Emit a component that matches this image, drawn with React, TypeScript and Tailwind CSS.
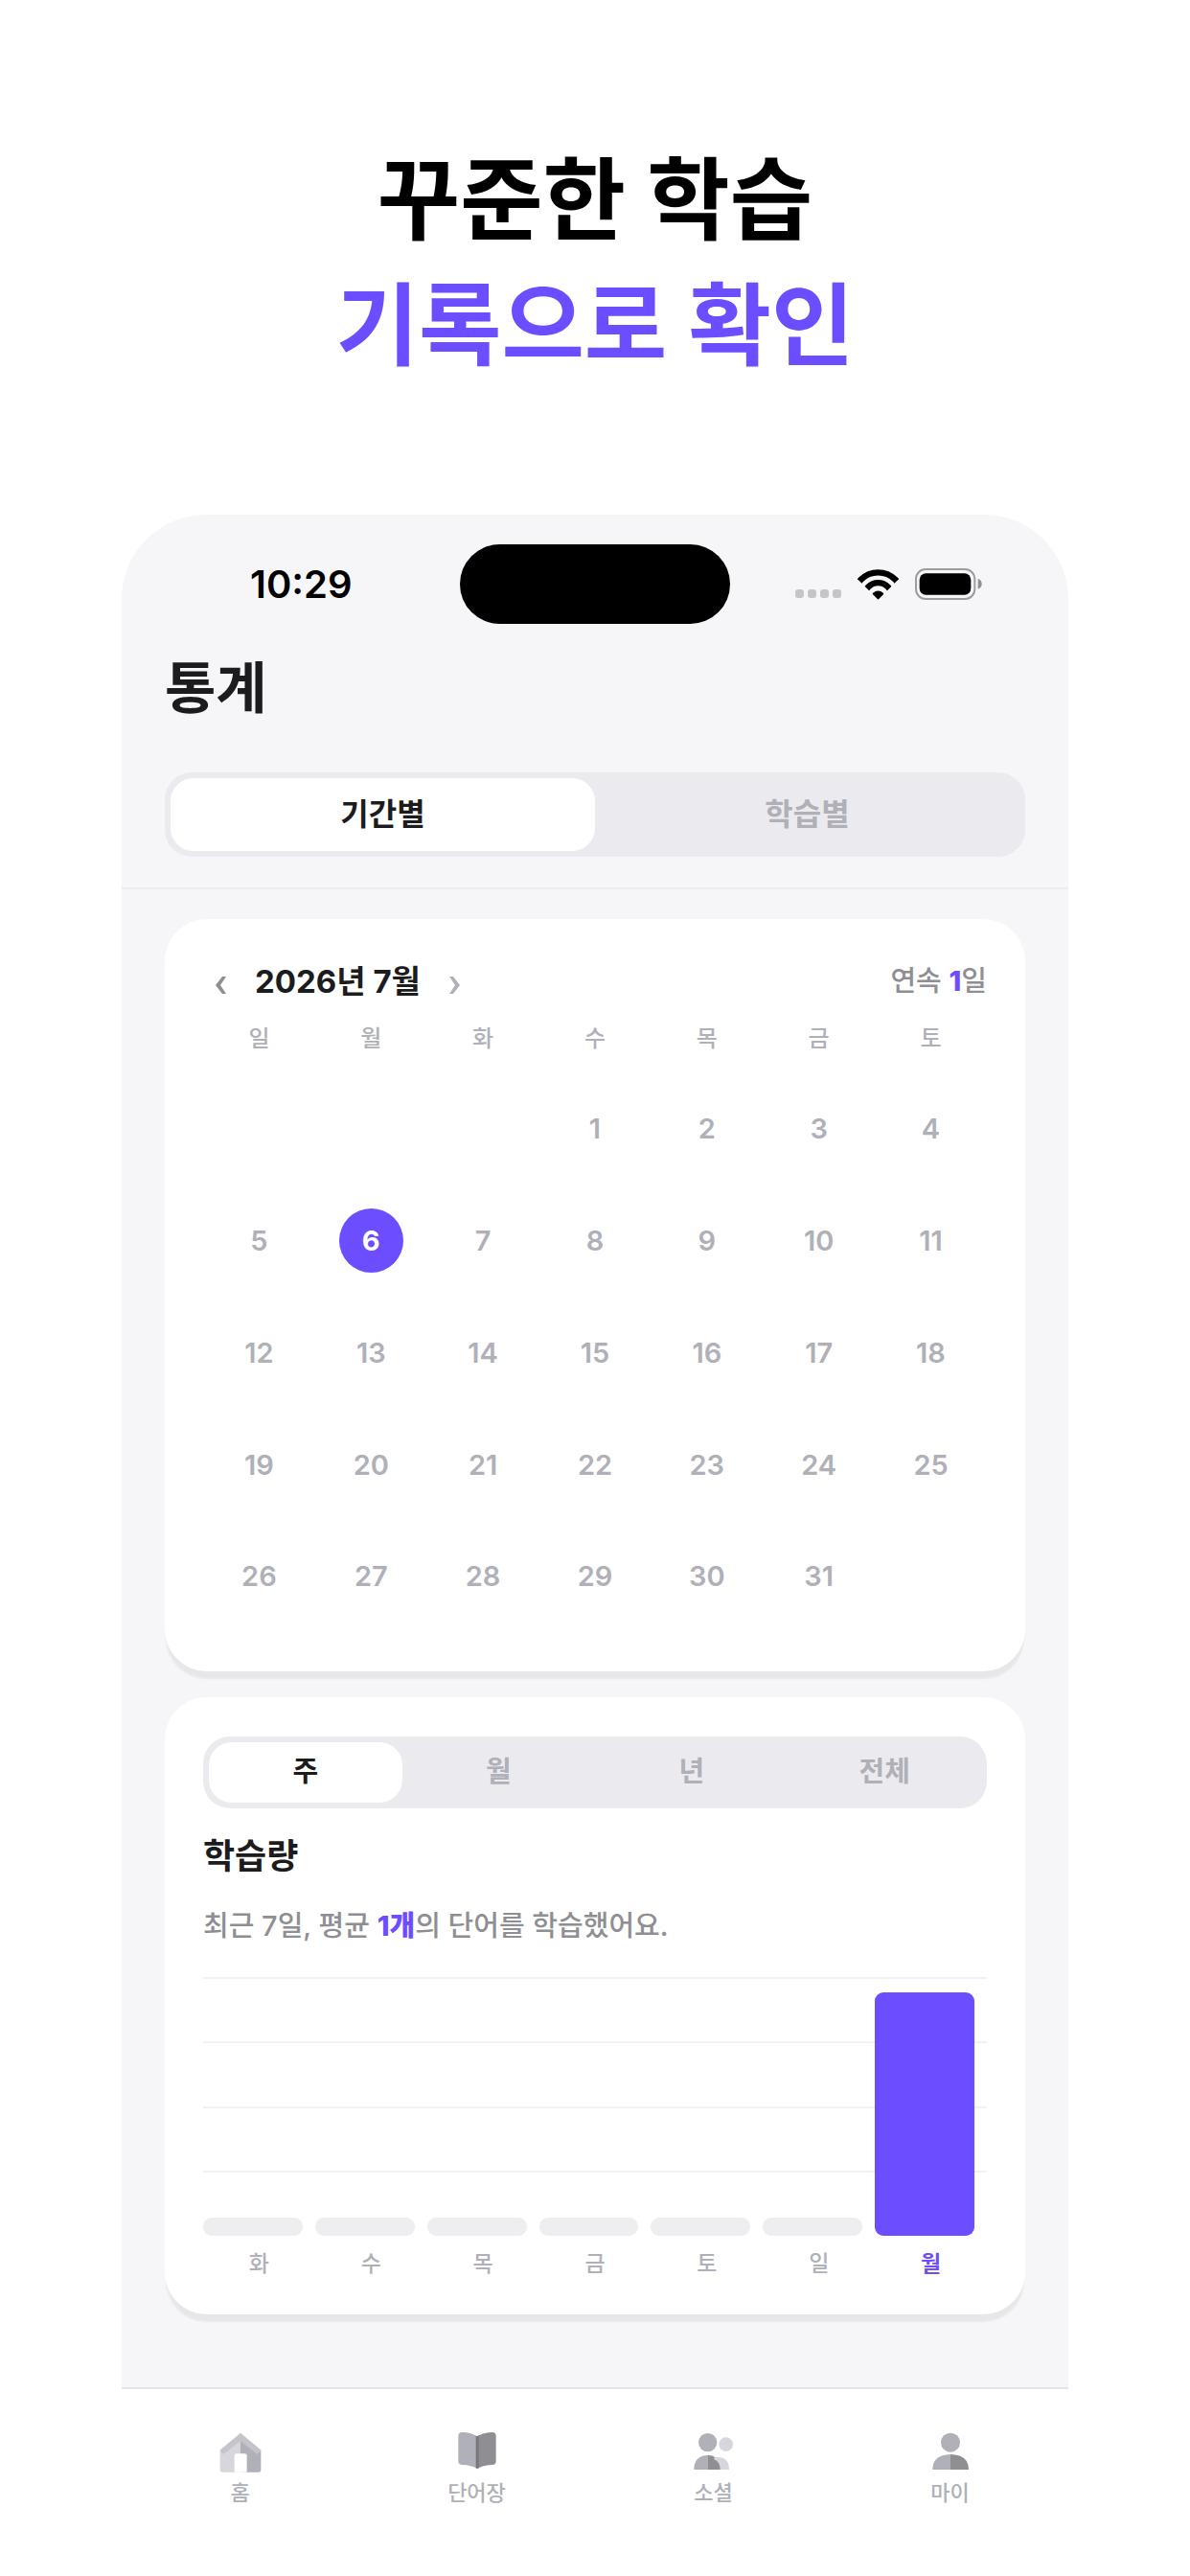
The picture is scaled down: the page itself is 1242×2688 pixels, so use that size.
import { useState, type ReactNode } from "react";
import clsx from "clsx";

const viewTabs = ["기간별", "학습별"];
const rangeTabs = ["주", "월", "년", "전체"];
const weekdays = ["일", "월", "화", "수", "목", "금", "토"];

// July 2026 starts on a Wednesday
const weeks: (number | null)[][] = [
  [null, null, null, 1, 2, 3, 4],
  [5, 6, 7, 8, 9, 10, 11],
  [12, 13, 14, 15, 16, 17, 18],
  [19, 20, 21, 22, 23, 24, 25],
  [26, 27, 28, 29, 30, 31, null],
];
const today = 6;

const studyData = [
  { day: "화", percent: 0 },
  { day: "수", percent: 0 },
  { day: "목", percent: 0 },
  { day: "금", percent: 0 },
  { day: "토", percent: 0 },
  { day: "일", percent: 0 },
  { day: "월", percent: 94 },
];

function WifiIcon() {
  return (
    <svg viewBox="0 0 128 94" className="w-[43px] h-8" aria-hidden="true">
      <clipPath id="wifi-wedge">
        <path d="M64 94L-2 28V-5H130V28Z" />
      </clipPath>
      <g clipPath="url(#wifi-wedge)" fill="none" stroke="#000" strokeWidth="19">
        <circle cx="64" cy="85" r="75.5" />
        <circle cx="64" cy="85" r="43.5" />
        <circle cx="64" cy="87" r="21" fill="#000" stroke="none" />
      </g>
    </svg>
  );
}

function BatteryIcon() {
  return (
    <svg viewBox="0 0 210 99" className="w-[70px] h-[33px]" aria-hidden="true">
      <rect x="3" y="3" width="184" height="93" rx="30" fill="none" stroke="#9d9d9f" strokeWidth="6" />
      <rect x="14" y="16" width="161" height="67" rx="20" />
      <path d="M197 33Q209 37 209 49T197 65Z" fill="#8f8f91" />
    </svg>
  );
}

function HomeIcon() {
  return (
    <svg viewBox="0 0 132 126" className="w-11 h-[42px]" aria-hidden="true">
      <path d="M66 3L2 56V117Q2 125 10 125H66Z" fill="#d6d6dc" />
      <path d="M66 3L130 56V117Q130 125 122 125H66Z" fill="#b0b0b8" />
      <path d="M66 3L130 56L128 60L119 69L66 27L13 69L4 60L2 56Z" fill="#c4c4ca" />
      <path d="M47 125V73Q47 67 53 67H79Q86 67 86 73V125Z" fill="#fff" />
    </svg>
  );
}

function BookIcon() {
  return (
    <svg viewBox="0 0 132 126" className="w-11 h-[42px]" aria-hidden="true">
      <path d="M66 13Q46 0 19 0Q7 0 7 12V90Q7 102 20 102Q48 103 66 114Z" fill="#b0b0b8" />
      <path d="M66 13Q86 0 113 0Q125 0 125 12V90Q125 102 112 102Q84 103 66 114Z" fill="#8e8e93" />
      <path d="M62 11L66 13L71 10V112L66 114L62 112Z" fill="#77777c" />
    </svg>
  );
}

function SocialIcon() {
  return (
    <svg viewBox="0 0 132 126" className="w-11 h-[42px]" aria-hidden="true">
      <circle cx="104" cy="38" r="22" fill="#d6d6dc" />
      <path d="M64 78H78Q114 78 114 117H80Z" fill="#d6d6dc" />
      <circle cx="47" cy="32" r="29" fill="#b0b0b8" />
      <path d="M48 72Q4 73 4 117H48Z" fill="#b0b0b8" />
      <path d="M48 72Q62 72 69 78L66 84Q86 92 86 117H48Z" fill="#8e8e93" />
    </svg>
  );
}

function MyIcon() {
  return (
    <svg viewBox="0 0 132 126" className="w-11 h-[42px]" aria-hidden="true">
      <circle cx="66" cy="32" r="30" fill="#b0b0b8" />
      <path d="M66 69Q10 71 10 117H66Z" fill="#b0b0b8" />
      <path d="M66 69Q123 71 123 117H66Z" fill="#8e8e93" />
    </svg>
  );
}

const navItems = [
  { href: "#home", label: "홈", icon: <HomeIcon /> },
  { href: "#words", label: "단어장", icon: <BookIcon /> },
  { href: "#social", label: "소셜", icon: <SocialIcon /> },
  { href: "#my", label: "마이", icon: <MyIcon /> },
];

function StatusBar() {
  return (
    <div className="grid grid-cols-[1fr_282px_1fr] items-center">
      <span className="pl-[134px] text-[40px] leading-[48px] font-semibold text-black">10:29</span>
      <div className="h-[83px] rounded-full bg-black" />
      <div className="flex items-end justify-end gap-[17px] pr-[90px]">
        <div className="flex gap-1 pb-0.5">
          {[0, 1, 2, 3].map((dot) => (
            <span key={dot} className="size-[9px] rounded-[3px] bg-[#c5c5c7]" />
          ))}
        </div>
        <WifiIcon />
        <BatteryIcon />
      </div>
    </div>
  );
}

type SegmentProps = {
  tabs: string[];
  active: string;
  onChange: (tab: string) => void;
  size?: "md" | "lg";
};

function Segment({ tabs, active, onChange, size = "md" }: SegmentProps) {
  return (
    <div role="tablist" className="flex rounded-[28px] bg-[#ebebef] p-1.5">
      {tabs.map((tab) => (
        <button
          key={tab}
          type="button"
          role="tab"
          aria-selected={tab === active}
          onClick={() => onChange(tab)}
          className={clsx(
            "flex-1 rounded-[24px] font-bold",
            size === "lg" ? "h-[76px] text-[32px]" : "h-[63px] text-[29px]",
            tab === active ? "bg-white text-[#1c1c1e]" : "text-[#b0b0b8]"
          )}
        >
          {tab}
        </button>
      ))}
    </div>
  );
}

function Card({ children }: { children: ReactNode }) {
  return (
    <section className="rounded-[44px] bg-white px-10 pt-[41px] pb-10 shadow-[0_9px_2px_-1px_rgba(0,0,0,0.06)]">
      {children}
    </section>
  );
}

function Calendar() {
  return (
    <Card>
      <div className="flex h-12 items-center justify-between">
        <div className="flex items-center gap-[18px]">
          <button type="button" aria-label="이전 달" className="flex h-12 w-9 items-center justify-center pt-2">
            <svg viewBox="0 0 11 18" className="h-[18px] w-[11px]" fill="#8e8e93">
              <path d="M7 0H11L5 9L11 18H7L0 9Z" />
            </svg>
          </button>
          <h2 className="text-[33px] leading-[48px] font-bold text-[#1c1c1e]">2026년 7월</h2>
          <button type="button" aria-label="다음 달" className="flex h-12 w-9 items-center justify-center pt-2">
            <svg viewBox="0 0 11 18" className="h-[18px] w-[11px]" fill="#b0b0b8">
              <path d="M4 0H0L6 9L0 18H4L11 9Z" />
            </svg>
          </button>
        </div>
        <p className="text-[29px] leading-[48px] font-medium text-[#8e8e93]">
          연속 <strong className="font-extrabold text-[#6c4dff]">1</strong>일
        </p>
      </div>
      <table className="w-full table-fixed">
        <thead>
          <tr>
            {weekdays.map((day) => (
              <th key={day} scope="col" className="h-[71px] p-0 text-2xl font-medium text-[#b0b0b8]">
                {day}
              </th>
            ))}
          </tr>
        </thead>
        <tbody>
          {weeks.map((week, index) => (
            <tr key={index}>
              {week.map((date, column) => (
                <td key={column} className="p-0">
                  <div className="flex aspect-square items-center justify-center text-[29px] font-semibold text-[#b0b0b8]">
                    {date === today ? (
                      <span className="flex size-[67px] items-center justify-center rounded-full bg-[#6c4dff] font-bold text-white">
                        {date}
                      </span>
                    ) : (
                      date
                    )}
                  </div>
                </td>
              ))}
            </tr>
          ))}
        </tbody>
      </table>
    </Card>
  );
}

function StudyChart() {
  return (
    <div>
      <div className="relative h-[270px]">
        <div className="absolute inset-0 grid grid-rows-4">
          {[0, 1, 2, 3].map((line) => (
            <div key={line} className="border-t-2 border-[#f2f2f3]" />
          ))}
        </div>
        <div className="relative grid h-full grid-cols-7 items-end">
          {studyData.map(({ day, percent }) => (
            <div
              key={day}
              className={clsx("mr-[13px] min-h-[19px] rounded-[9px]", percent > 0 ? "bg-[#6c4dff]" : "bg-[#eeeef0]")}
              style={{ height: `${percent}%` }}
            />
          ))}
        </div>
      </div>
      <div className="mt-4 grid grid-cols-7 text-center text-[23px] leading-[26px]">
        {studyData.map(({ day, percent }) => (
          <span key={day} className={percent > 0 ? "font-bold text-[#6c4dff]" : "font-medium text-[#b0b0b8]"}>
            {day}
          </span>
        ))}
      </div>
    </div>
  );
}

export default function App() {
  const [view, setView] = useState("기간별");
  const [range, setRange] = useState("주");

  return (
    <main className="min-h-screen bg-white px-[127px] pt-36 font-['Inter','Noto_Sans_CJK_KR',sans-serif]">
      <h1 className="text-center text-[94px] leading-[131px] font-bold text-black">
        꾸준한 학습
        <br />
        <span className="text-[#6c4dff]">기록으로 확인</span>
      </h1>

      <div className="mt-[131px] rounded-t-[88px] bg-[#f6f6f8] pt-[31px]">
        <StatusBar />
        <header className="border-b-2 border-[#ececee] px-[45px] pt-7 pb-8">
          <h2 className="mb-[49px] text-[58px] leading-[78px] font-bold text-[#1c1c1e]">통계</h2>
          <Segment tabs={viewTabs} active={view} onChange={setView} size="lg" />
        </header>

        <div className="flex flex-col gap-[27px] px-[45px] pt-[31px] pb-[76px]">
          <Calendar />
          <Card>
            <Segment tabs={rangeTabs} active={range} onChange={setRange} />
            <h3 className="mt-[26px] text-[36px] leading-[48px] font-bold text-[#1c1c1e]">학습량</h3>
            <p className="mt-[26px] mb-[30px] text-[29px] leading-[46px] font-medium text-[#8e8e93]">
              최근 7일, 평균 <strong className="font-extrabold text-[#6c4dff]">1개</strong>의 단어를 학습했어요.
            </p>
            <StudyChart />
          </Card>
        </div>

        <nav className="flex border-t-2 border-[#e6e6e8] bg-white pt-[45px] pb-[74px]">
          {navItems.map((item) => (
            <a
              key={item.label}
              href={item.href}
              className="flex flex-1 flex-col items-center gap-[7px] text-[22px] leading-7 font-medium text-[#b0b0b8]"
            >
              {item.icon}
              {item.label}
            </a>
          ))}
        </nav>
      </div>
    </main>
  );
}
